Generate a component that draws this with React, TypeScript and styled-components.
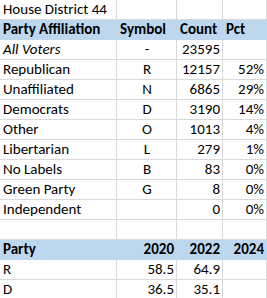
import styled, { createGlobalStyle } from 'styled-components';

const GlobalStyle = createGlobalStyle`
  html, body {
    margin: 0;
    padding: 0;
    background: #ffffff;
  }
  body {
    font-family: Carlito, Lato, 'Liberation Sans', sans-serif;
    font-size: 15px;
    color: #000000;
    overflow: hidden;
  }
`;

type Align = 'left' | 'center' | 'right';

type Row = {
  cells: string[];
  align?: Align[];
  bold?: boolean;
  italic?: boolean;
  header?: boolean;
};

const STATS_ALIGN: Align[] = ['left', 'center', 'right', 'right'];
const TREND_ALIGN: Align[] = ['left', 'right', 'right', 'right'];

const rows: Row[] = [
  { cells: ['House District 44', '', '', ''] },
  { cells: ['Party Affiliation', 'Symbol', 'Count', 'Pct'], bold: true, header: true },
  { cells: ['All Voters', '-', '23595', ''], align: STATS_ALIGN, italic: true },
  { cells: ['Republican', 'R', '12157', '52%'], align: STATS_ALIGN },
  { cells: ['Unaffiliated', 'N', '6865', '29%'], align: STATS_ALIGN },
  { cells: ['Democrats', 'D', '3190', '14%'], align: STATS_ALIGN },
  { cells: ['Other', 'O', '1013', '4%'], align: STATS_ALIGN },
  { cells: ['Libertarian', 'L', '279', '1%'], align: STATS_ALIGN },
  { cells: ['No Labels', 'B', '83', '0%'], align: STATS_ALIGN },
  { cells: ['Green Party', 'G', '8', '0%'], align: STATS_ALIGN },
  { cells: ['Independent', '', '0', '0%'], align: STATS_ALIGN },
  { cells: ['', '', '', ''] },
  { cells: ['Party', '2020', '2022', '2024'], align: TREND_ALIGN, bold: true, header: true },
  { cells: ['R', '58.5', '64.9', ''], align: TREND_ALIGN },
  { cells: ['D', '36.5', '35.1', ''], align: TREND_ALIGN },
];

const Sheet = styled.div`
  display: grid;
  grid-template-columns: 117px 60px 46px 44px;
  grid-auto-rows: 20px;
  width: 267px;
`;

const Cell = styled.div<{ $align: Align; $bold?: boolean; $italic?: boolean; $fill?: boolean }>`
  box-sizing: border-box;
  height: 20px;
  padding: 0 2px 0 3px;
  line-height: 19px;
  white-space: nowrap;
  overflow: hidden;
  text-align: ${({ $align }) => $align};
  font-weight: ${({ $bold }) => ($bold ? 700 : 400)};
  font-style: ${({ $italic }) => ($italic ? 'italic' : 'normal')};
  background: ${({ $fill }) => ($fill ? '#bdd7ee' : 'transparent')};
  border-right: 1px solid ${({ $fill }) => ($fill ? '#bdd7ee' : '#d9d9d9')};
  border-bottom: 1px solid ${({ $fill }) => ($fill ? '#bdd7ee' : '#d9d9d9')};
`;

export default function App() {
  return (
    <>
      <GlobalStyle />
      <Sheet>
        {rows.map((row, r) =>
          row.cells.map((text, c) => (
            <Cell
              key={`${r}-${c}`}
              $align={row.align ? row.align[c] : 'left'}
              $bold={row.bold}
              $italic={row.italic && c === 0}
              $fill={row.header}
            >
              {text}
            </Cell>
          )),
        )}
      </Sheet>
    </>
  );
}
